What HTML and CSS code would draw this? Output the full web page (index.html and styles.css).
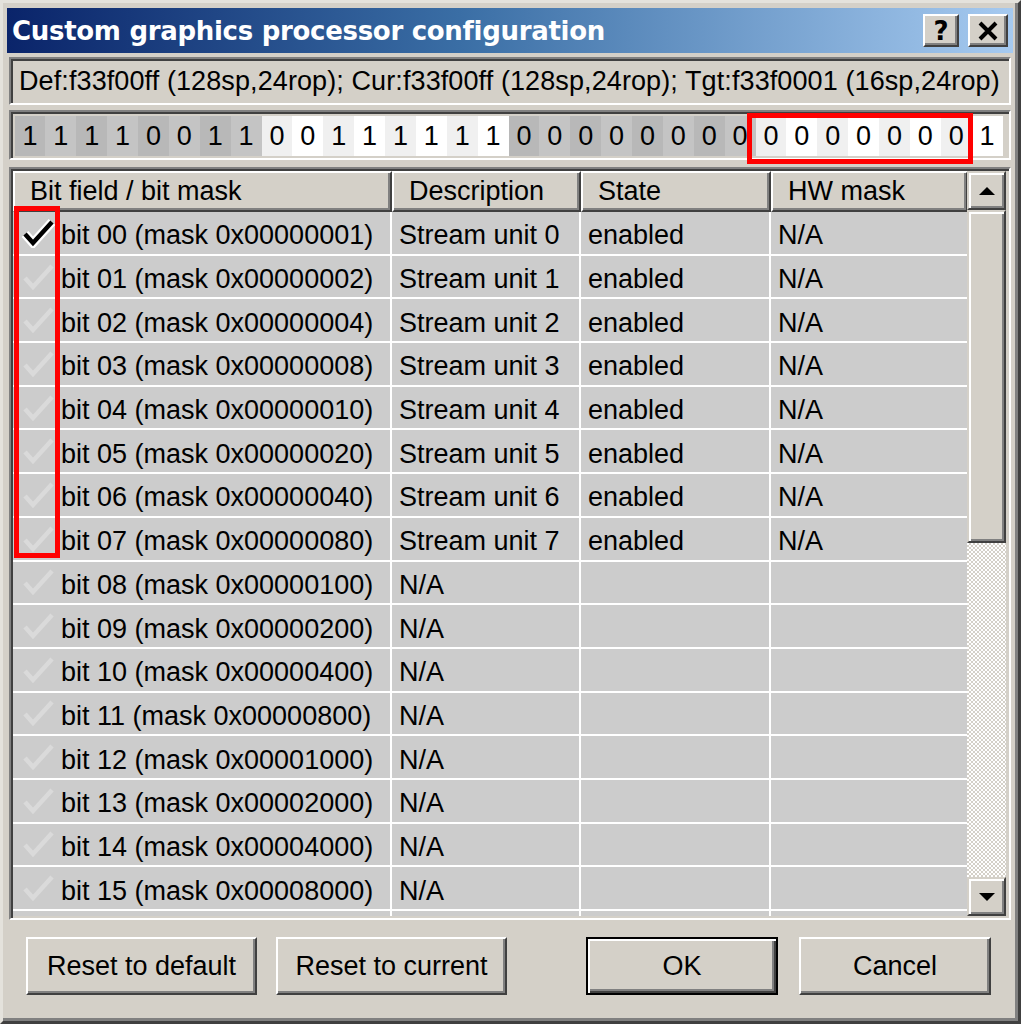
FILE: index.html
```html
<!DOCTYPE html>
<html>
<head>
<meta charset="utf-8">
<link rel="stylesheet" href="styles.css">
</head>
<body>
<div class="window">
  <div class="titlebar">
    <span class="title">Custom graphics processor configuration</span>
    <div class="tbtns">
      <div class="tbtn help">?</div>
      <div class="tbtn close">
        <svg width="22" height="20" viewBox="0 0 22 20"><path d="M3 2 L19 18 M19 2 L3 18" stroke="#000" stroke-width="4"/></svg>
      </div>
    </div>
  </div>
  <div class="content">
    <div class="field info">Def:f33f00ff (128sp,24rop); Cur:f33f00ff (128sp,24rop); Tgt:f33f0001 (16sp,24rop)</div>
    <div class="field bits">
      <div class="bitgrid">
        <span class="b g0">1</span><span class="b g1">1</span><span class="b g0">1</span><span class="b g1">1</span><span class="b g0">0</span><span class="b g1">0</span><span class="b g0">1</span><span class="b g1">1</span>
        <span class="b w0">0</span><span class="b w1">0</span><span class="b w0">1</span><span class="b w1">1</span><span class="b w0">1</span><span class="b w1">1</span><span class="b w0">1</span><span class="b w1">1</span>
        <span class="b g0">0</span><span class="b g1">0</span><span class="b g0">0</span><span class="b g1">0</span><span class="b g0">0</span><span class="b g1">0</span><span class="b g0">0</span><span class="b g1">0</span>
        <span class="b w0">0</span><span class="b w1">0</span><span class="b w0">0</span><span class="b w1">0</span><span class="b w0">0</span><span class="b w1">0</span><span class="b w0">0</span><span class="b w1">1</span>
      </div>
      <div class="redbox bitsbox"></div>
    </div>
    <div class="list">
      <div class="listmain">
        <div class="header">
          <div class="hcell c1">Bit field / bit mask</div>
          <div class="hcell c2">Description</div>
          <div class="hcell c3">State</div>
          <div class="hcell c4">HW mask</div>
        </div>
        <div class="rows" id="rows"></div>
        <div class="redbox checkbox"></div>
      </div>
      <div class="scrollbar">
        <div class="sbtn"><svg width="16" height="10" viewBox="0 0 16 10"><path d="M0 9 L8 1 L16 9 Z" fill="#000"/></svg></div>
        <div class="thumb"></div>
        <div class="track"></div>
        <div class="sbtn"><svg width="16" height="10" viewBox="0 0 16 10"><path d="M0 1 L8 9 L16 1 Z" fill="#000"/></svg></div>
      </div>
    </div>
    <div class="buttons">
      <div class="left">
        <div class="btn w230">Reset to default</div>
        <div class="btn w230">Reset to current</div>
      </div>
      <div class="right">
        <div class="btn default">OK</div>
        <div class="btn">Cancel</div>
      </div>
    </div>
  </div>
</div>
<script src="app.js"></script>
</body>
</html>
```
FILE: app.js
```js
(function(){
  var rows = document.getElementById('rows');
  var html = '';
  function hex(n){ var s = n.toString(16).toUpperCase(); while(s.length<8) s='0'+s; return s; }
  for (var i=0;i<16;i++){
    var num = (i<10?'0':'')+i;
    var active = i<8;
    var checked = i===0;
    var check = checked
      ? '<svg class="chk" width="36" height="30" viewBox="0 0 36 30"><path d="M4 16 L12 25 L31 4" fill="none" stroke="#fff" stroke-width="9" stroke-linejoin="miter"/><path d="M4 16 L12 25 L31 4" fill="none" stroke="#000" stroke-width="4.5" stroke-linejoin="miter"/></svg>'
      : '<svg class="chk" width="36" height="30" viewBox="0 0 36 30"><path d="M4 16 L12 25 L31 4" fill="none" stroke="#dadada" stroke-width="4.5"/></svg>';
    html += '<div class="row">' +
      '<div class="cell c1"><span class="ck">'+check+'</span><span>bit '+num+' (mask 0x'+hex(Math.pow(2,i))+')</span></div>' +
      '<div class="cell c2">'+(active?'Stream unit '+i:'N/A')+'</div>' +
      '<div class="cell c3">'+(active?'enabled':'')+'</div>' +
      '<div class="cell c4">'+(active?'N/A':'')+'</div>' +
      '</div>';
  }
  html += '<div class="row"><div class="cell c1"></div><div class="cell c2"></div><div class="cell c3"></div><div class="cell c4"></div></div>';
  rows.innerHTML = html;
})();
```
FILE: styles.css
```css
html, body { margin: 0; padding: 0; background: #d4d0c8; }
body { font-family: "Liberation Sans", Arial, sans-serif; font-size: 27px; color: #000; }

.window {
  width: 1021px; height: 1024px; box-sizing: border-box;
  background: #d4d0c8;
  border: 3px solid; border-color: #e4e2dc #404040 #404040 #e4e2dc;
  box-shadow: inset -3px -3px 0 #808080;
  padding: 5px 5px 5px 4px;
  display: flex; flex-direction: column;
}

.titlebar {
  height: 45px; flex: none;
  background: linear-gradient(to right, #0a246a 0%, #3a6ea5 45%, #a6caf0 100%);
  display: flex; align-items: center; justify-content: space-between;
  padding: 0 5px 0 5px;
}
.title {
  font-family: "DejaVu Sans", Verdana, sans-serif; font-weight: bold; font-size: 26px;
  color: #fff; letter-spacing: -0.3px;
}
.tbtns { display: flex; gap: 9px; }
.tbtn {
  width: 36px; height: 33px; box-sizing: border-box;
  background: #d4d0c8;
  border: 2px solid; border-color: #fff #404040 #404040 #fff;
  box-shadow: inset -2px -2px 0 #808080;
  display: flex; align-items: center; justify-content: center;
  font-family: "DejaVu Sans", sans-serif; font-weight: bold; font-size: 26px; line-height: 1;
}
.tbtn.close { width: 40px; }

.content { flex: 1; display: flex; flex-direction: column; padding: 4px 2px 0 2px; }

.field {
  box-sizing: border-box;
  border: 2px solid; border-color: #808080 #fff #fff #808080;
  box-shadow: inset 2px 2px 0 #404040, inset -2px -2px 0 #d4d0c8;
  position: relative;
}
.info { height: 48px; padding: 0 8px; display: flex; align-items: center; white-space: nowrap; letter-spacing: 0.1px; }
.bits { height: 50px; margin-top: 5px; padding: 4px 4px 2px 4px; }
.bitgrid { display: grid; grid-template-columns: repeat(32, 1fr); width: 988px; height: 100%; margin-left: -0.5px; }
.b { display: flex; align-items: center; justify-content: center; }
.g0 { background: #b8b8b8; }
.g1 { background: #c4c4c4; }
.w0 { background: #f0f0f0; }
.w1 { background: #ffffff; }

.redbox { position: absolute; border: 5px solid #ff0000; box-sizing: border-box; pointer-events: none; }
.bitsbox { left: 736px; top: 1px; width: 226px; height: 51px; }

.list {
  margin-top: 7px; height: 753px; box-sizing: border-box;
  border: 2px solid; border-color: #808080 #fff #fff #808080;
  box-shadow: inset 2px 2px 0 #404040, inset -2px -2px 0 #d4d0c8;
  padding: 2px 3px 2px 2px;
  display: flex;
}
.listmain { flex: 1; position: relative; overflow: hidden; background: #d4d0c8; }
.header { display: flex; height: 41px; }
.hcell {
  box-sizing: border-box; height: 41px;
  border: 2px solid; border-color: #fff #404040 #404040 #fff;
  box-shadow: inset -2px -2px 0 #808080;
  background: #d4d0c8;
  display: flex; align-items: center; padding-left: 15px; white-space: nowrap;
}
.c1 { width: 379px; flex: none; }
.c2 { width: 189px; flex: none; }
.c3 { width: 190px; flex: none; }
.c4 { width: 197px; flex: none; }

.rows { display: flex; flex-direction: column; }
.row { display: flex; height: 43.7px; box-sizing: border-box; border-bottom: 2px solid #fff; flex: none; }
.cell {
  background: #cccccc; box-sizing: border-box; border-right: 2px solid #fff;
  display: flex; align-items: center; padding-left: 7px; padding-top: 6px; white-space: nowrap;
}
.cell.c1 { padding-left: 4px; }
.cell.c4 { border-right: none; }
.ck { width: 44px; height: 34px; display: flex; align-items: center; justify-content: center; flex: none; margin-top: -6px; }
.chk { display: block; }
.checkbox { left: 1px; top: 35px; width: 46px; height: 352px; }

.scrollbar { width: 39px; flex: none; display: flex; flex-direction: column; }
.sbtn {
  height: 39px; flex: none; box-sizing: border-box;
  background: #d4d0c8;
  border: 2px solid; border-color: #d4d0c8 #404040 #404040 #d4d0c8;
  box-shadow: inset 2px 2px 0 #fff, inset -2px -2px 0 #808080;
  display: flex; align-items: center; justify-content: center;
}
.thumb {
  height: 333px; flex: none; box-sizing: border-box;
  background: #d4d0c8;
  border: 2px solid; border-color: #d4d0c8 #404040 #404040 #d4d0c8;
  box-shadow: inset 2px 2px 0 #fff, inset -2px -2px 0 #808080;
}
.track {
  flex: 1;
  background-color: #fff;
  background-image: conic-gradient(#d4d0c8 25%, transparent 0 50%, #d4d0c8 0 75%, transparent 0);
  background-size: 4px 4px;
}

.buttons { display: flex; justify-content: space-between; padding: 17px 20px 0 17px; }
.left, .right { display: flex; gap: 19px; }
.right { gap: 21px; }
.btn {
  width: 192px; height: 58px; box-sizing: border-box;
  background: #d4d0c8;
  border: 2px solid; border-color: #fff #404040 #404040 #fff;
  box-shadow: inset -2px -2px 0 #808080;
  display: flex; align-items: center; justify-content: center; white-space: nowrap;
}
.btn.w230 { width: 231px; }
.btn.default {
  border: 2px solid #000;
  box-shadow: inset 2px 2px 0 #fff, inset -2px -2px 0 #404040, inset -4px -4px 0 #808080;
}
```
